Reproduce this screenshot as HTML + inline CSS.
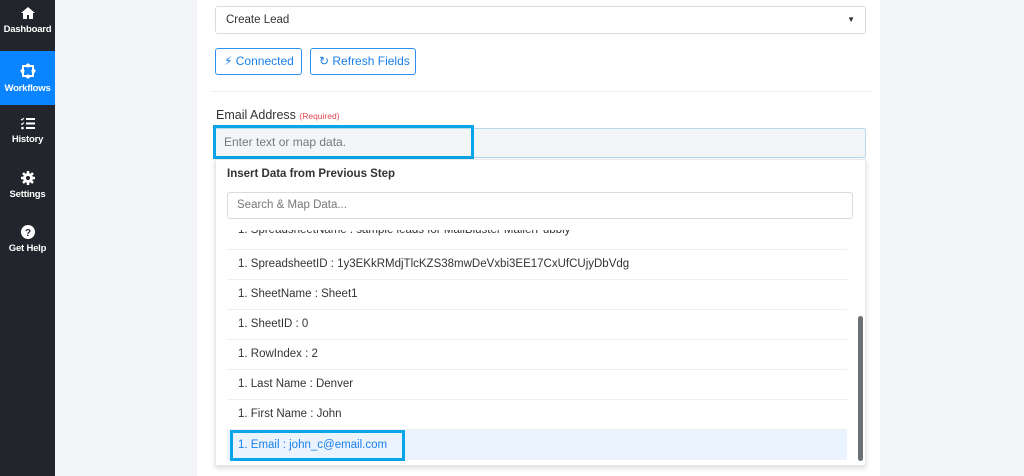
<!DOCTYPE html>
<html><head><style>
*{box-sizing:border-box;margin:0;padding:0}
body{width:1024px;height:476px;overflow:hidden;background:#f3f5f8;font-family:"Liberation Sans",sans-serif;position:relative;color:#333}
.sb{position:absolute;left:0;top:0;width:55px;height:476px;background:#22252b}
.nav{position:absolute;left:0;width:55px;height:54px;color:#fff;font-size:9.5px;font-weight:bold;text-align:center;letter-spacing:-0.2px}
.nav svg{display:block;margin:0 auto 4px}
.panel{position:absolute;left:197px;top:0;width:683px;height:476px;background:#fff}
.abs{position:absolute}
.btn{position:absolute;top:48px;height:27px;border:1px solid #2f8ff0;border-radius:3px;color:#1a7fe8;font-size:12px;line-height:25px;padding-left:8px}
.row{position:absolute;left:227px;width:620px;height:30px;border-bottom:1px solid #eceef1;font-size:11.5px;line-height:29px;padding-left:11px;color:#333}
</style></head><body>
<div class="sb">
 <div class="nav" style="top:6px"><svg width="16" height="14" viewBox="0 0 16 14"><path d="M8 1L1 7h2v6h4V9h2v4h4V7h2z" fill="#fff"/></svg>Dashboard</div>
 <div class="nav" style="top:51px;background:#0a84ff;padding-top:12px"><svg width="16" height="16" viewBox="0 0 16 16"><rect x="3" y="3" width="10" height="10" fill="none" stroke="#fff" stroke-width="2"/><circle cx="8" cy="2.5" r="2" fill="#fff"/><circle cx="8" cy="13.5" r="2" fill="#fff"/><circle cx="2.5" cy="8" r="2" fill="#fff"/><circle cx="13.5" cy="8" r="2" fill="#fff"/></svg>Workflows</div>
 <div class="nav" style="top:117px"><svg width="14" height="13" viewBox="0 0 14 13"><path d="M5 2h9M5 6.5h9M5 11h9" stroke="#fff" stroke-width="2"/><path d="M0 2l1 1 2-2M0 6.5l1 1 2-2" stroke="#fff" fill="none"/><circle cx="1.5" cy="11" r="1.3" fill="#fff"/></svg>History</div>
 <div class="nav" style="top:171px"><svg width="14" height="14" viewBox="0 0 14 14"><circle cx="7" cy="7" r="5" fill="#fff"/><path d="M7 0v14M0 7h14M2 2l10 10M12 2L2 12" stroke="#fff" stroke-width="2.5"/><circle cx="7" cy="7" r="2" fill="#22252b"/></svg>Settings</div>
 <div class="nav" style="top:225px"><svg width="14" height="14" viewBox="0 0 14 14"><circle cx="7" cy="7" r="7" fill="#fff"/><text x="7" y="11" font-size="10" font-weight="bold" text-anchor="middle" fill="#22252b" font-family="Liberation Sans">?</text></svg>Get Help</div>
</div>
<div class="panel"></div>
<div class="abs" style="left:215px;top:6px;width:651px;height:28px;border:1px solid #d8dce1;border-radius:3px;font-size:11.5px;line-height:26px;padding-left:10px;color:#333">Create Lead<span style="position:absolute;right:10px;top:0;font-size:8px">▼</span></div>
<div class="btn" style="left:215px;width:87px">⚡︎ Connected</div>
<div class="btn" style="left:310px;width:106px">↻ Refresh Fields</div>
<div class="abs" style="left:211px;top:91px;width:660px;height:1px;background:#eceef1"></div>
<div class="abs" style="left:216px;top:108px;font-size:12.5px;color:#333">Email Address <span style="font-size:8.5px;color:#e8464f">(Required)</span></div>
<div class="abs" style="left:215px;top:128px;width:651px;height:30px;border:1px solid #b8d8f0;background:#f3f6f9;border-radius:2px"></div>
<div class="abs" style="left:213px;top:125px;width:261px;height:34px;border:3px solid #0aa5e8;font-size:12px;line-height:28px;padding-left:8px;color:#777">Enter text or map data.</div>
<div class="abs" style="left:215px;top:159px;width:651px;height:307px;background:#fff;box-shadow:0 2px 5px rgba(0,0,0,.15);border:1px solid #e6e8eb"></div>
<div class="abs" style="left:227px;top:168px;font-size:11.5px;font-weight:bold;color:#333">Insert Data from Previous Step</div>
<div class="abs" style="left:227px;top:192px;width:626px;height:27px;border:1px solid #d8dce1;border-radius:3px;font-size:11.5px;line-height:25px;padding-left:9px;color:#777;background:#fff">Search &amp; Map Data...</div>
<div class="abs" style="left:227px;top:230px;width:620px;height:20px;overflow:hidden">
 <div style="position:absolute;top:-14px;left:11px;font-size:11.5px;line-height:29px;white-space:nowrap">1. SpreadsheetName : sample leads for MailBluster MailerPubbly</div>
 <div style="position:absolute;top:19px;left:0;width:620px;height:1px;background:#eceef1"></div>
</div>
<div class="row" style="top:250px">1. SpreadsheetID : 1y3EKkRMdjTlcKZS38mwDeVxbi3EE17CxUfCUjyDbVdg</div>
<div class="row" style="top:280px">1. SheetName : Sheet1</div>
<div class="row" style="top:310px">1. SheetID : 0</div>
<div class="row" style="top:340px">1. RowIndex : 2</div>
<div class="row" style="top:370px">1. Last Name : Denver</div>
<div class="row" style="top:400px">1. First Name : John</div>
<div class="row" style="top:430px;background:#ebf4fe;border:none;color:#1a7fe8"></div>
<div class="abs" style="left:230px;top:430px;width:175px;height:31px;border:3px solid #0aa5e8;font-size:11.5px;line-height:25px;padding-left:5px;color:#1a7fe8">1. Email : john_c@email.com</div>
<div class="abs" style="left:858px;top:316px;width:5px;height:145px;background:#6b7075;border-radius:3px"></div>
</body></html>
